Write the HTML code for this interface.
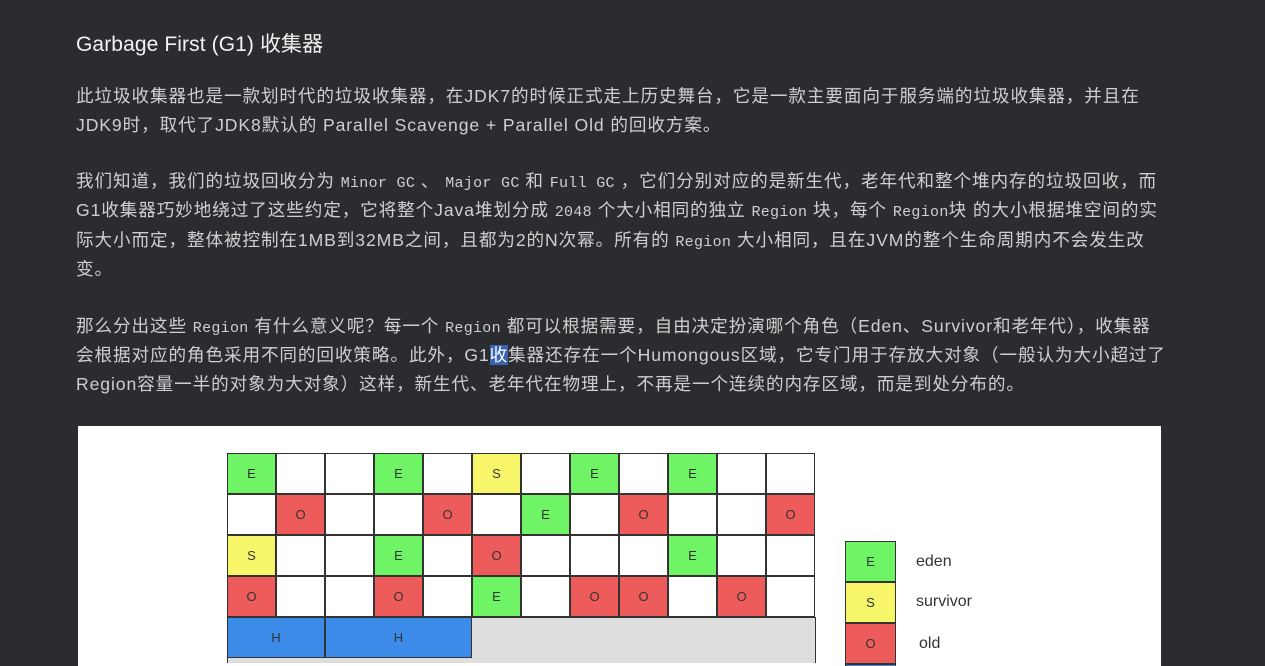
<!DOCTYPE html>
<html><head><meta charset="utf-8"><style>
html,body{margin:0;padding:0;width:1265px;height:666px;overflow:hidden;background:#2b2c2f;}
body{font-family:"Liberation Sans","Noto Sans CJK SC",sans-serif;color:#cfcfcf;position:relative}
.h{position:absolute;left:76px;top:28px;font-size:21px;color:#f2f2f2;white-space:nowrap;letter-spacing:0.1px}
.l{position:absolute;left:76px;font-size:17.6px;white-space:nowrap;line-height:29px;height:29px;letter-spacing:0.9px}
code{font-family:"Liberation Mono","Noto Sans CJK SC",monospace;font-size:15px;letter-spacing:0.3px}
.img{position:absolute;left:78px;top:426px;width:1083px;height:240px;background:#fff;overflow:hidden}
.c{position:absolute;width:47px;height:39px;border:1px solid #333;font:13px "Liberation Sans",sans-serif;color:#333;display:flex;align-items:center;justify-content:center;box-sizing:content-box}
.E{background:#6ef465}.S{background:#f7f66a}.O{background:#ee5b5b}.H{background:#3d8be8}.W{background:#fff}
.lab{position:absolute;font:16px "Liberation Sans",sans-serif;color:#333}
</style></head><body>
<div class="h">Garbage First (G1) 收集器</div>
<div class="l" style="top:82px">此垃圾收集器也是一款划时代的垃圾收集器，在JDK7的时候正式走上历史舞台，它是一款主要面向于服务端的垃圾收集器，并且在</div>
<div class="l" style="top:111px">JDK9时，取代了JDK8默认的 Parallel Scavenge + Parallel Old 的回收方案。</div>
<div class="l" style="top:167px">我们知道，我们的垃圾回收分为 <code>Minor GC</code> 、 <code>Major GC</code> 和 <code>Full GC</code> ，它们分别对应的是新生代，老年代和整个堆内存的垃圾回收，而</div>
<div class="l" style="top:196px">G1收集器巧妙地绕过了这些约定，它将整个Java堆划分成 <code>2048</code> 个大小相同的独立 <code>Region</code> 块，每个 <code>Region</code>块 的大小根据堆空间的实</div>
<div class="l" style="top:226px">际大小而定，整体被控制在1MB到32MB之间，且都为2的N次幂。所有的 <code>Region</code> 大小相同，且在JVM的整个生命周期内不会发生改</div>
<div class="l" style="top:255px">变。</div>
<div class="l" style="top:312px">那么分出这些 <code>Region</code> 有什么意义呢？每一个 <code>Region</code> 都可以根据需要，自由决定扮演哪个角色（Eden、Survivor和老年代），收集器</div>
<div class="l" style="top:341px">会根据对应的角色采用不同的回收策略。此外，G1<span style="background:#3a64b0;color:#fff">收</span>集器还存在一个Humongous区域，它专门用于存放大对象（一般认为大小超过了</div>
<div class="l" style="top:370px">Region容量一半的对象为大对象）这样，新生代、老年代在物理上，不再是一个连续的内存区域，而是到处分布的。</div>
<div class="img" id="img">
<div style="position:absolute;left:149px;top:191px;width:587px;height:45px;background:#dedede;border:1px solid #333;border-bottom:none"></div>
</div>
<script>
var rows=["E..E.S.E.E..",".O..O.E.O..O","S..E.O...E..","O..O.E.OO.O."];
var img=document.getElementById('img'),h='';
rows.forEach(function(r,i){for(var j=0;j<12;j++){var ch=r[j];var cls=ch=='.'?'W':ch;
h+='<div class="c '+cls+'" style="left:'+(149+j*49)+'px;top:'+(27+i*41)+'px">'+(ch=='.'?'':ch)+'</div>';}});
h+='<div class="c H" style="left:149px;top:191px;width:96px">H</div>';
h+='<div class="c H" style="left:247px;top:191px;width:145px">H</div>';
h+='<div class="c E" style="left:767px;top:115px;width:49px">E</div><div class="c S" style="left:767px;top:156px;width:49px">S</div><div class="c O" style="left:767px;top:197px;width:49px">O</div><div class="c H" style="left:767px;top:238px;width:49px;height:1px"></div>';
h+='<div class="lab" style="left:838px;top:127px">eden</div><div class="lab" style="left:838px;top:167px">survivor</div><div class="lab" style="left:841px;top:209px">old</div>';
img.innerHTML+=h;
</script>
</body></html>
